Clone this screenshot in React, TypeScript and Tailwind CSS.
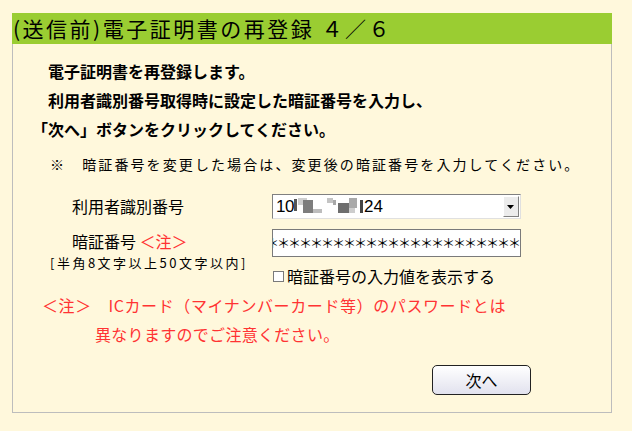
import React from "react";

const jp = { fontFamily: '"Noto Sans CJK JP", "Noto Sans", sans-serif' };

function Mosaic() {
  return (
    <svg width="70" height="20" viewBox="0 0 70 20" className="shrink-0">
      <rect x="0" y="2" width="3" height="12" fill="#555" />
      <rect x="4" y="1" width="9" height="7" fill="#cfcfcf" />
      <rect x="9" y="3" width="10" height="13" fill="#7d7d7d" />
      <rect x="19" y="12" width="9" height="4" fill="#bdbdbd" />
      <rect x="33" y="1" width="6" height="5" fill="#c4c4c4" />
      <rect x="39" y="3" width="3" height="5" fill="#a8a8a8" />
      <rect x="44" y="6" width="11" height="10" fill="#6e6e6e" />
      <rect x="55" y="1" width="8" height="10" fill="#a9a9a9" />
      <rect x="55" y="11" width="6" height="5" fill="#cdcdcd" />
      <rect x="66" y="3" width="3" height="13" fill="#444" />
    </svg>
  );
}

export default function App() {
  return (
    <div className="w-[632px] h-[431px] bg-[#fff8dc] pt-[13px] pl-[12px]" style={jp}>
      <div className="w-[600px]">
        <div className="h-[31px] bg-[#9acd32] flex items-center pl-[1px] text-[21px] tracking-[2.5px] text-black leading-none whitespace-nowrap">
          (送信前)電子証明書の再登録 ４／６
        </div>
        <div className="border-l border-r border-b border-[#bdbdbd] h-[369px] flex flex-col">
          <div className="pl-[19px] pt-[13px] text-[16px] font-bold text-black">
            <div className="h-[28px] leading-[28px]">　電子証明書を再登録します。</div>
            <div className="h-[29px] leading-[29px] mt-[1px]">　利用者識別番号取得時に設定した暗証番号を入力し、</div>
            <div className="h-[28px] leading-[28px]">「次へ」ボタンをクリックしてください。</div>
          </div>
          <div className="pl-[37px] mt-[11px] text-[14px] tracking-[2.1px] leading-[20px] h-[20px] text-black whitespace-nowrap">
            ※　暗証番号を変更した場合は、変更後の暗証番号を入力してください。
          </div>
          <div className="flex mt-[20px]">
            <div className="w-[259px] pl-[59px] text-[16px] leading-[25px] text-black">利用者識別番号</div>
            <div className="w-[249px] h-[25px] bg-white border border-t-[#808080] border-l-[#808080] border-r-[#e0e0e0] border-b-[#e0e0e0] flex items-center">
              <div className="flex-1 flex items-center pl-[3px] text-[17px] text-black" style={{ fontFamily: '"Liberation Sans", Arial, sans-serif' }}>
                <span className="tracking-[-0.5px]">10</span>
                <Mosaic />
                <span>24</span>
              </div>
              <div className="w-[16px] h-[21px] mr-[1px] bg-[#ececec] border border-t-white border-l-white border-r-[#808080] border-b-[#808080] flex items-center justify-center">
                <svg width="8" height="4" viewBox="0 0 8 4"><path d="M0 0 H7 L3.5 4 Z" fill="#000" /></svg>
              </div>
            </div>
          </div>
          <div className="flex mt-[10px]">
            <div className="w-[259px]">
              <div className="pl-[59px] text-[16px] leading-[24px] h-[24px] text-black">
                暗証番号 <span className="text-[#ff3333]">＜注＞</span>
              </div>
              <div className="pl-[37px] text-[13px] tracking-[2.5px] leading-[20px] h-[20px] text-black whitespace-nowrap">
                [半角8文字以上50文字以内]
              </div>
            </div>
            <div className="w-[249px]">
              <div className="h-[28px] bg-white border border-[#7a7a7a] overflow-hidden flex items-center justify-end pr-[1px]">
                <span className="whitespace-nowrap text-[13px] tracking-[-2px] text-black">
                  ＊＊＊＊＊＊＊＊＊＊＊＊＊＊＊＊＊＊＊＊＊＊＊＊＊＊＊
                </span>
              </div>
              <div className="flex items-center mt-[8px] h-[22px]">
                <div className="w-[11px] h-[11px] bg-white border border-[#7a7a7a] ml-[1px] mr-[3px]" />
                <span className="text-[16px] text-black leading-[22px]">暗証番号の入力値を表示する</span>
              </div>
            </div>
          </div>
          <div className="mt-[4px] text-[16px] text-[#ff3333] whitespace-nowrap">
            <div className="pl-[29px] h-[28px] leading-[28px] tracking-[0.6px]">＜注＞　ICカード（マイナンバーカード等）のパスワードとは</div>
            <div className="pl-[82px] h-[29px] leading-[29px] mt-[1px] tracking-[0.3px]">異なりますのでご注意ください。</div>
          </div>
          <div className="flex mt-[16px]">
            <button className="ml-[419px] w-[99px] h-[30px] rounded-[5px] border border-[#222] bg-gradient-to-b from-white to-[#e2e2ee] text-[16px] text-black">
              次へ
            </button>
          </div>
        </div>
      </div>
    </div>
  );
}
